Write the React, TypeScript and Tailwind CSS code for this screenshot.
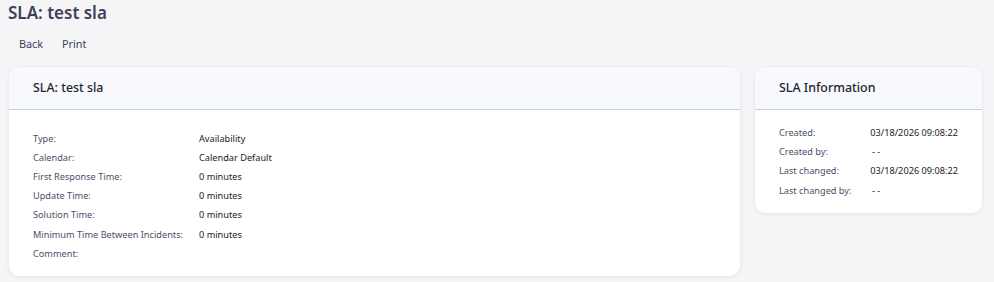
const slaRows = [
  { label: "Type:", value: "Availability" },
  { label: "Calendar:", value: "Calendar Default" },
  { label: "First Response Time:", value: "0 minutes" },
  { label: "Update Time:", value: "0 minutes" },
  { label: "Solution Time:", value: "0 minutes" },
  { label: "Minimum Time Between Incidents:", value: "0 minutes" },
  { label: "Comment:", value: "" },
];

const infoRows = [
  { label: "Created:", value: "03/18/2026 09:08:22" },
  { label: "Created by:", value: "- -" },
  { label: "Last changed:", value: "03/18/2026 09:08:22" },
  { label: "Last changed by:", value: "- -" },
];

function Card({ title, children, className }: { title: string; children: React.ReactNode; className?: string }) {
  return (
    <div className={"rounded-[10px] bg-white shadow-[0_1px_4px_rgba(0,0,0,0.08)] overflow-hidden " + (className ?? "")}>
      <div className="h-[43px] flex items-center bg-[#f7f9fd] border-b border-[#c5cde0] px-6 text-[12.4px] font-medium text-[#1f2333]">
        {title}
      </div>
      {children}
    </div>
  );
}

export default function App() {
  return (
    <div className="min-h-[282px] bg-[#f5f5f7] font-['Noto_Sans',sans-serif] text-[#3d4256]">
      <div className="pl-2 pt-[1px] text-[17px] font-semibold leading-[24px] text-[#3d4256]">SLA: test sla</div>
      <div className="flex gap-[19px] pl-[19px] mt-[11px] text-[10.8px] leading-[16px] text-[#3a4058]">
        <button>Back</button>
        <button>Print</button>
      </div>
      <div className="flex gap-[15px] pl-[9px] pr-3 mt-[15px]">
        <Card title="SLA: test sla" className="w-[731px]">
          <div className="px-6 pt-[19px] pb-[13px] text-[9.2px]">
            {slaRows.map((r) => (
              <div key={r.label} className="flex h-[19.2px] items-center whitespace-nowrap">
                <div className="w-[166px] text-[#4a5068]">{r.label}</div>
                <div className="text-[#222]">{r.value}</div>
              </div>
            ))}
          </div>
        </Card>
        <Card title="SLA Information" className="w-[227px] self-start">
          <div className="px-6 pt-[13px] pb-[13px] text-[9.2px]">
            {infoRows.map((r) => (
              <div key={r.label} className="flex h-[19.3px] items-center whitespace-nowrap">
                <div className="w-[93px] text-[#4a5068]">{r.label}</div>
                <div className="text-[#222]">{r.value}</div>
              </div>
            ))}
          </div>
        </Card>
      </div>
    </div>
  );
}
